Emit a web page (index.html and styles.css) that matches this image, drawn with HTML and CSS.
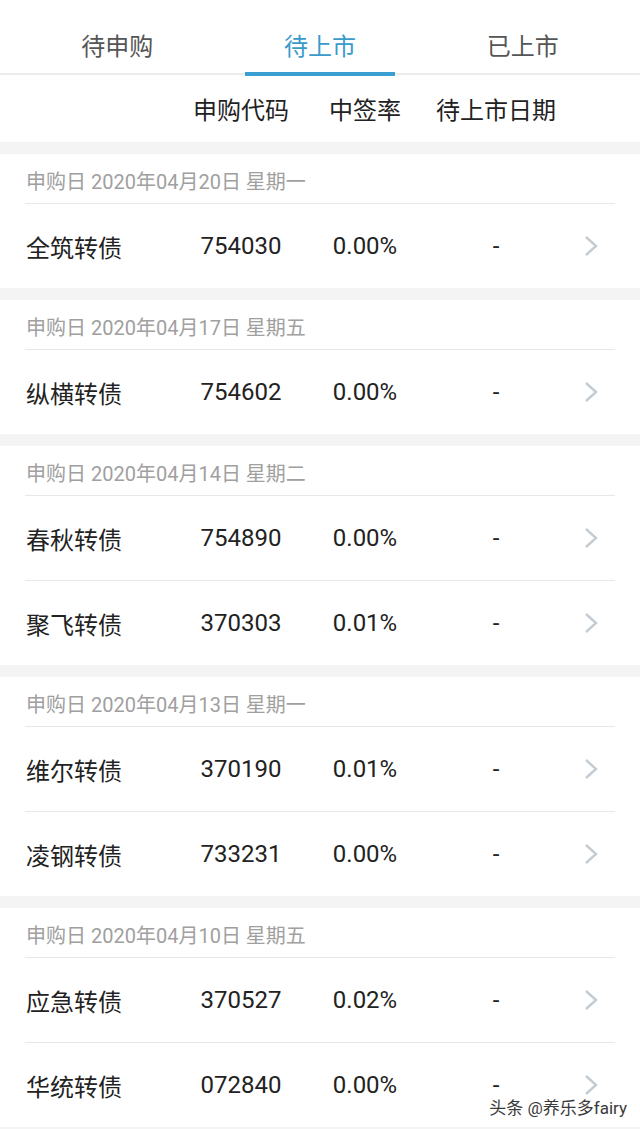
FILE: index.html
```html
<!DOCTYPE html>
<html lang="zh-CN">
<head>
    <meta charset="UTF-8">
    <meta name="viewport" content="width=device-width, initial-scale=1.0">
    <title>待上市</title>
    <link rel="stylesheet" href="styles.css">
</head>
<body>

    <div class="tabs">
        <div class="tab">待申购</div>
        <div class="tab active">待上市</div>
        <div class="tab">已上市</div>
    </div>

    <div class="thead">
        <span></span>
        <span class="col">申购代码</span>
        <span class="col">中签率</span>
        <span class="col">待上市日期</span>
    </div>

    <div id="list"></div>

    <div class="watermark">头条 @养乐多fairy</div>

    <script>
        const groups = [
            { day: '申购日 2020年04月20日 星期一', items: [['全筑转债', '754030', '0.00%']] },
            { day: '申购日 2020年04月17日 星期五', items: [['纵横转债', '754602', '0.00%']] },
            { day: '申购日 2020年04月14日 星期二', items: [['春秋转债', '754890', '0.00%'], ['聚飞转债', '370303', '0.01%']] },
            { day: '申购日 2020年04月13日 星期一', items: [['维尔转债', '370190', '0.01%'], ['凌钢转债', '733231', '0.00%']] },
            { day: '申购日 2020年04月10日 星期五', items: [['应急转债', '370527', '0.02%'], ['华统转债', '072840', '0.00%']] }
        ];

        const chevron = '<svg width="14" height="22" viewBox="0 0 14 22"><polyline points="2,2 12,11 2,20" fill="none" stroke="#c3cbd3" stroke-width="2.4"/></svg>';

        let html = '';
        groups.forEach(function (g) {
            html += '<div class="group"><div class="day">' + g.day + '</div>';
            g.items.forEach(function (it) {
                html += '<div class="row">';
                html += '<span class="name">' + it[0] + '</span>';
                html += '<span class="col">' + it[1] + '</span>';
                html += '<span class="col">' + it[2] + '</span>';
                html += '<span class="col">-</span>';
                html += '<span class="arrow">' + chevron + '</span>';
                html += '</div>';
            });
            html += '</div>';
        });
        document.getElementById('list').innerHTML = html;
    </script>

</body>
</html>
```

FILE: styles.css
```css
body {
    margin: 0;
    background-color: #f4f4f4;
    font-family: Roboto, "Noto Sans CJK SC", sans-serif;
    color: #222;
    overflow: hidden;
}
.tabs {
    display: grid;
    grid-template-columns: repeat(3, 1fr);
    padding: 0 16px;
    height: 73px;
    background-color: #fff;
    border-bottom: 2px solid #ececec;
}
.tab {
    position: relative;
    display: flex;
    align-items: center;
    justify-content: center;
    padding-top: 16px;
    font-size: 24px;
    color: #555;
}
.tab.active {
    color: #3a9acb;
}
.tab.active::after {
    content: "";
    position: absolute;
    left: 50%;
    bottom: -3px;
    width: 150px;
    height: 4px;
    margin-left: -75px;
    background-color: #3a9fd0;
}
.thead, .row {
    display: grid;
    grid-template-columns: 135px 162px 86px 176px 14px;
    align-items: center;
}
.thead {
    height: 67px;
    padding: 0 25px;
    background-color: #fff;
    font-size: 24px;
}
.col {
    text-align: center;
}
.group {
    margin-top: 12px;
    background-color: #fff;
}
.day {
    height: 49px;
    padding: 12px 0 0 26px;
    box-sizing: border-box;
    font-size: 20px;
    color: #a0a0a0;
}
.row {
    height: 84px;
    margin: 0 25px;
    border-top: 1px solid #e8e8e8;
    font-size: 24px;
}
.name {
    padding-left: 1px;
}
.arrow {
    display: flex;
    justify-content: center;
}
.watermark {
    position: absolute;
    right: 13px;
    top: 1094px;
    font-size: 17px;
    color: #3a3a3a;
    text-shadow: 0 0 2px #fff, 0 0 2px #fff;
}
```
